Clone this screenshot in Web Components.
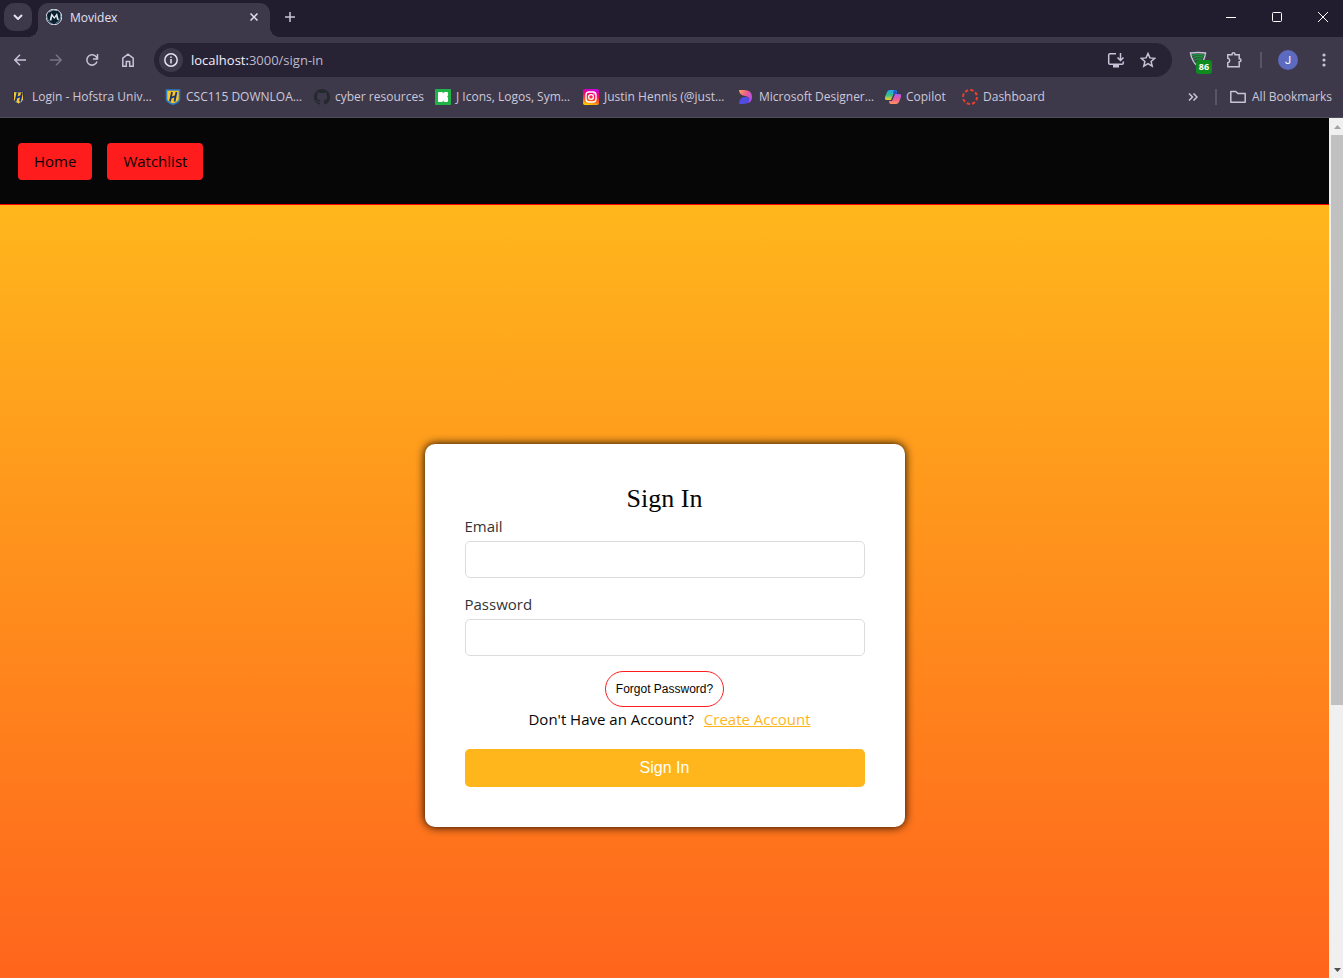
<!DOCTYPE html>
<html lang="en">
<head>
<meta charset="utf-8">
<title>Movidex</title>
<style>
  html, body { height: 100%; margin: 0; }
  body { overflow: hidden; font-family: "Open Sans", "Noto Sans", sans-serif; }
</style>
</head>
<body>
<browser-window></browser-window>

<script>
const define = (name, html) => {
  const template = document.createElement('template');
  template.innerHTML = html;
  customElements.define(name, class extends HTMLElement {
    constructor() {
      super();
      this.attachShadow({ mode: 'open' }).append(template.content.cloneNode(true));
    }
  });
};

define('tool-button', `
  <style>
    :host { display: flex; flex: none; width: 20px; height: 20px; color: #c9c3d9; }
    button { all: unset; display: flex; align-items: center; justify-content: center; width: 100%; height: 100%; }
  </style>
  <button type="button"><slot></slot></button>`);

define('tab-strip', `
  <style>
    :host { display: flex; flex: none; height: 37px; background: #211d2e; color: #e4e0ef; }
    svg { display: block; fill: none; stroke: currentColor; }
    .search { all: unset; display: grid; place-items: center; width: 28px; height: 28px; margin: 3px 6px 0 4px; border-radius: 10px; background: #3d394b; }
    .tab { position: relative; display: flex; align-items: center; box-sizing: border-box; width: 232px; height: 34px; margin-top: 3px; padding: 0 10px 6px 8px; gap: 8px; border-radius: 10px 10px 0 0; background: #3d394b; font-size: 12px; }
    .tab::before, .tab::after { content: ""; position: absolute; bottom: 0; width: 10px; height: 10px; }
    .tab::before { right: 100%; background: radial-gradient(circle at 0 0, transparent 10px, #3d394b 10px); }
    .tab::after { left: 100%; background: radial-gradient(circle at 100% 0, transparent 10px, #3d394b 10px); }
    .name { flex: 1; }
    tool-button { color: #e4e0ef; }
    .tab tool-button { width: 12px; }
    .new { margin: 7px 0 0 10px; color: #c9c3d9; }
    .controls { display: flex; align-items: center; gap: 26px; margin-left: auto; padding: 0 10px 3px 0; }
    .controls tool-button { color: #fff; }
  </style>
  <button class="search" type="button" aria-label="Search tabs"><svg width="10" height="6" viewBox="0 0 10 6" stroke-width="2"><path d="M1 1l4 4 4-4"/></svg></button>
  <div class="tab">
    <svg width="16" height="16" viewBox="0 0 16 16" stroke="none"><circle cx="8" cy="8" r="7.800" fill="#0c1f2e"/><path d="M3 3Q7-.5 11 1.500" stroke="#9db8c6"/><path d="M3.500 11.500L5.500 4l2.800 4L11 4l2 7.500-2-1-.8-3L8.300 10 6.200 7.500l-.7 4z" fill="#dfe9ee" stroke="none"/><path d="M.8 7q.5 6 6 8M14.500 5q1.500 6-5 9.500" stroke="#6f91a3"/></svg>
    <span class="name">Movidex</span>
    <tool-button aria-label="Close tab"><svg width="8" height="8" viewBox="0 0 8 8" stroke-width="1.5"><path d="M.5.5l7 7M7.500.5l-7 7"/></svg></tool-button>
  </div>
  <tool-button class="new" aria-label="New tab"><svg width="12" height="12" viewBox="0 0 12 12" stroke-width="1.5"><path d="M6 1v10M1 6h10"/></svg></tool-button>
  <div class="controls">
    <tool-button aria-label="Minimize"><svg width="10" height="10" viewBox="0 0 10 10"><path d="M0 5.500h10"/></svg></tool-button>
    <tool-button aria-label="Maximize"><svg width="10" height="10" viewBox="0 0 10 10"><rect x=".5" y=".5" width="9" height="9" rx="1"/></svg></tool-button>
    <tool-button aria-label="Close"><svg width="10" height="10" viewBox="0 0 10 10"><path d="M0 0l10 10M10 0L0 10"/></svg></tool-button>
  </div>`);

define('address-bar', `
  <style>
    :host { display: flex; flex: 1; min-width: 0; box-sizing: border-box; align-items: center; height: 34px; padding: 0 14px 0 5px; border-radius: 17px; background: #272335; color: #c9c3d9; }
    svg { display: block; fill: none; stroke: currentColor; stroke-width: 1.5; }
    .info { width: 24px; height: 24px; border-radius: 12px; background: #3d394b; color: #e4e0ef; }
    .url { flex: 1; margin-left: 8px; font-size: 13px; line-height: 20px; color: #bdb8ca; }
    b { font-weight: 400; color: #f1eefa; }
    .star { margin-left: 12px; }
  </style>
  <tool-button class="info" aria-label="Site information"><svg width="14" height="14" viewBox="0 0 14 14"><circle cx="7" cy="7" r="6.200"/><path d="M7 6v4.500M7 3.500v1.500"/></svg></tool-button>
  <div class="url"><b>localhost:</b>3000/sign-in</div>
  <tool-button aria-label="Install"><svg width="18" height="16" viewBox="0 0 18 16"><path d="M9 1.700H3Q1.700 1.700 1.700 3v8q0 1.300 1.300 1.300h12q1.300 0 1.300-1.300V9.500M13.500 1v7M10.500 5.500l3 3 3-3"/><path d="M6 14h6" stroke-width="3"/></svg></tool-button>
  <tool-button class="star" aria-label="Bookmark this page"><svg width="16" height="16" viewBox="0 0 16 16"><path d="M8 1.500l1.900 4.400 4.800.4-3.600 3.200 1.100 4.700L8 11.700l-4.200 2.500 1.100-4.700L1.300 6.300l4.800-.4z"/></svg></tool-button>`);

define('tool-bar', `
  <style>
    :host { display: flex; flex: none; align-items: center; height: 46px; gap: 16px; padding: 0 9px 0 10px; box-sizing: border-box; background: #3d394b; }
    svg { display: block; fill: none; stroke: currentColor; stroke-width: 1.5; }
    .off { color: #777286; }
    .right { display: flex; align-items: center; gap: 16px; color: #c9c3d9; }
    .ext { position: relative; }
    .badge { position: absolute; left: 8px; top: 10px; width: 16px; height: 14px; border-radius: 3px; background: #0f8a1e; color: #fff; font-size: 9px; font-weight: 700; line-height: 14px; text-align: center; }
    .rule { width: 2px; height: 16px; background: #595468; }
    .avatar { width: 20px; height: 20px; border-radius: 50%; background: #5c6bc0; color: #fff; font-family: Roboto, sans-serif; font-size: 11px; }
  </style>
  <tool-button aria-label="Back"><svg width="12" height="12" viewBox="0 0 12 12"><path d="M12 6H1M6 .8L.9 6 6 11.200"/></svg></tool-button>
  <tool-button class="off" aria-label="Forward"><svg width="12" height="12" viewBox="0 0 12 12"><path d="M0 6h11M6 .8L11.100 6 6 11.200"/></svg></tool-button>
  <tool-button aria-label="Reload"><svg width="14" height="14" viewBox="0 0 14 14"><path d="M12 8.500A5.200 5.200 0 1 1 11.500 4.200L12.500 5.700M12.500 1v5H8"/></svg></tool-button>
  <tool-button aria-label="Home page"><svg width="14" height="14" viewBox="0 0 14 14"><path d="M1.800 13.200V5.200L7 1.200l5.200 4v8H8.700V8.500H5.300v4.700z"/></svg></tool-button>
  <address-bar></address-bar>
  <div class="right">
    <tool-button class="ext" aria-label="Blocker"><svg width="18" height="18" viewBox="0 0 18 18" stroke-width="1" stroke="#23ad45"><path d="M1.500 2q8-1 15 0-1 9-7.500 13.500Q3 11 1.500 2z"/><path d="M3 4.500q6-2 12.500 0M4 7q5-2.500 10.500-.5M5 9.500q4-3 8-1" stroke="#1b9638"/></svg><span class="badge">86</span></tool-button>
    <tool-button aria-label="Extensions"><svg width="18" height="18" viewBox="0 0 18 18"><path d="M2.800 3.800H7Q7 1.800 8.500 1.800T10 3.800h4.200v4q1.800 0 1.800 1.500t-1.800 1.500v4.900H2.800v-4q1.900-.4 1.900-2.200T2.800 7.300z"/></svg></tool-button>
    <span class="rule"></span>
    <tool-button class="avatar" aria-label="Profile"><span>J</span></tool-button>
    <tool-button aria-label="Menu"><svg width="4" height="14" viewBox="0 0 4 14"><g fill="currentColor" stroke="none"><circle cx="2" cy="2" r="1.600"/><circle cx="2" cy="7" r="1.600"/><circle cx="2" cy="12" r="1.600"/></g></svg></tool-button>
  </div>`);

define('book-mark', `
  <style>
    :host { display: block; min-width: 0; }
    a { display: flex; align-items: center; gap: 5px; color: #cdc8d9; font-size: 12px; line-height: 18px; white-space: nowrap; text-decoration: none; }
    ::slotted(svg) { display: block; flex: none; fill: none; }
  </style>
  <a href="#"><slot name="icon"></slot><slot></slot></a>`);

define('bookmarks-bar', `
  <style>
    :host { display: flex; flex: none; align-items: center; justify-content: space-between; height: 35px; padding: 0 11px 7px 11px; box-sizing: border-box; border-bottom: 1px solid #514e5c; background: #3d394b; }
    nav { display: grid; grid-template-columns: 137px 132px 104px 131px 138px 130px 60px 80px; column-gap: 17px; }
    .all { display: flex; align-items: center; gap: 12px; color: #c9c3d9; }
    .rule { width: 2px; height: 16px; background: #595468; }
    .chev { display: block; fill: none; stroke: currentColor; stroke-width: 1.5; }
  </style>
  <nav aria-label="Bookmarks">
    <book-mark><svg slot="icon" width="16" height="16" viewBox="0 0 16 16"><path d="M2.500 2.500q5.500 1 10 0v8q0 2.500-5 4.500-5-2-5-4.500z" fill="#f7c52f" stroke="#142f7c"/><path d="M6.500 3.500l-2 9M11 3.500l-2 9M5 9l5-2" stroke="#142f7c" stroke-width="1.800"/></svg>Login - Hofstra Univ…</book-mark>
    <book-mark><svg slot="icon" width="16" height="16" viewBox="0 0 16 16"><path d="M1.500 1h13v9q0 3-6.500 5.200Q1.500 13 1.500 10z" fill="#f9c623" stroke="#2c7bc4" stroke-width="1.600"/><path d="M7 3L5 12.500M11.500 3l-2 9.500M5.500 9l5-2" stroke="#1a3474" stroke-width="1.800"/></svg>CSC115 DOWNLOA…</book-mark>
    <book-mark><svg slot="icon" width="16" height="16" viewBox="0 0 16 16"><path fill="#24292e" d="M8 0C3.580 0 0 3.580 0 8c0 3.540 2.290 6.530 5.470 7.590.4.070.55-.17.55-.38v-1.490c-2.010.37-2.530-.49-2.690-.94-.09-.23-.48-.94-.82-1.130-.28-.15-.68-.52-.01-.53.63-.01 1.080.58 1.230.82.72 1.210 1.870.87 2.330.66.07-.52.28-.87.51-1.070-1.780-.2-3.640-.89-3.640-3.950 0-.87.31-1.590.82-2.150-.08-.2-.36-1.020.08-2.120 0 0 .67-.21 2.200.82a7.420 7.420 0 0 1 4 0c1.530-1.040 2.200-.82 2.200-.82.44 1.100.16 1.920.08 2.120.51.56.82 1.270.82 2.150 0 3.070-1.870 3.750-3.650 3.950.29.25.54.73.54 1.480v2.200c0 .21.15.46.55.38A8 8 0 0 0 16 8c0-4.420-3.580-8-8-8z"/></svg>cyber resources</book-mark>
    <book-mark><svg slot="icon" width="16" height="16" viewBox="0 0 16 16"><rect width="16" height="16" rx="1" fill="#20b347"/><path d="M4 3h3q1 0 1 2 0-2 2-2h2q1 0 1 1v2q0 1-1 2 1 0 1 1v3q0 1-1 1h-2q-2 0-2-2 0 2-1 2H4q-1 0-1-1V4q0-1 1-1z" fill="#fff"/></svg>J Icons, Logos, Sym…</book-mark>
    <book-mark><svg slot="icon" width="16" height="16" viewBox="0 0 16 16"><defs><linearGradient id="ig" x1=".3" y1="1" x2=".5" y2="0"><stop offset="0" stop-color="#ffd600"/><stop offset=".3" stop-color="#ff5a1f"/><stop offset=".65" stop-color="#ff0169"/><stop offset="1" stop-color="#c800d8"/></linearGradient></defs><rect width="16" height="16" rx="2" fill="url(#ig)"/><rect x="3" y="3" width="10" height="10" rx="3" stroke="#fff" stroke-width="1.400"/><circle cx="8" cy="8" r="2.400" stroke="#fff" stroke-width="1.300"/><circle cx="11" cy="5" r=".7" fill="#fff"/></svg>Justin Hennis (@just…</book-mark>
    <book-mark><svg slot="icon" width="16" height="16" viewBox="0 0 16 16"><defs><linearGradient id="de" x2="1" y2=".6"><stop stop-color="#ffa45c"/><stop offset=".5" stop-color="#ee6088"/><stop offset="1" stop-color="#b44df0"/></linearGradient></defs><path d="M1 1h5q8 0 8 7 0 5-4 6l1-5q-2-2-4-2-6-1-6-6z" fill="url(#de)"/><path d="M1 15q0-6 5-7 4 0 5.500 1 .5 6-6.500 6z" fill="#514be0"/></svg>Microsoft Designer…</book-mark>
    <book-mark><svg slot="icon" width="16" height="16" viewBox="0 0 16 16"><defs><linearGradient id="cl" x2="0" y2="1"><stop stop-color="#20a7f5"/><stop offset=".5" stop-color="#35bd8a"/><stop offset="1" stop-color="#f3d32b"/></linearGradient><linearGradient id="cr" x2="0" y2="1"><stop stop-color="#aa5cf0"/><stop offset=".5" stop-color="#ee5799"/><stop offset="1" stop-color="#ff985b"/></linearGradient></defs><path d="M5 1h5q2 0 2 3H9L6 11H2q-3 0-2-3l2-5q1-2 3-2z" fill="url(#cl)"/><path d="M11 15H6q-2 0-2-3h3l3-7h4q3 0 2 3l-2 5q-1 2-3 2z" fill="url(#cr)"/><path d="M9 1q3 0 3 4h-2L8 4z" fill="#1e55d6"/></svg>Copilot</book-mark>
    <book-mark><svg slot="icon" width="16" height="16" viewBox="0 0 16 16"><circle cx="8" cy="8" r="7" stroke="#e8402f" stroke-width="2" stroke-dasharray="3.400 2.098"/></svg>Dashboard</book-mark>
  </nav>
  <div class="all">
    <tool-button aria-label="More bookmarks"><svg class="chev" width="10" height="8" viewBox="0 0 10 8"><path d="M1 .5L4.500 4 1 7.500M5.500.5L9 4 5.500 7.500"/></svg></tool-button>
    <span class="rule"></span>
    <book-mark><svg slot="icon" width="18" height="16" viewBox="0 0 18 16"><path d="M1.800 2.500h5l2 2h7.400v8.800H1.800z" stroke="#c9c3d9" stroke-width="1.500" stroke-linejoin="round"/></svg>All Bookmarks</book-mark>
  </div>`);

define('site-nav', `
  <style>
    :host { display: flex; flex: none; align-items: center; gap: 15px; height: 87px; box-sizing: border-box; padding: 0 18px; border-bottom: 1px solid #ff0000; background: #060606; }
    a { padding: 0 16px; border-radius: 4px; background: #ff1c1c; color: #060606; font-size: 15px; line-height: 37px; text-decoration: none; }
  </style>
  <a href="#">Home</a><a href="#">Watchlist</a>`);

define('form-field', `
  <style>
    :host { display: block; }
    label { display: flex; flex-direction: column; gap: 3px; color: #333; font-size: 15px; line-height: 24px; }
    input { box-sizing: border-box; width: 100%; height: 37px; padding: 0 10px; border: 1px solid #dcdcdc; border-radius: 5px; background: #fff; font-size: 16px; }
  </style>
  <label><slot></slot><input></label>`);

define('sign-in-card', `
  <style>
    :host { display: block; box-sizing: border-box; width: 480px; max-width: 100%; padding: 40px; border-radius: 10px; background: #fff; box-shadow: 0 0 10px #000; }
    form { display: flex; flex-direction: column; }
    h1 { margin: 0; color: #060606; font: 400 26px/30px "Liberation Serif", serif; text-align: center; }
    form-field { margin-bottom: 14px; }
    button { box-sizing: border-box; font-family: "Liberation Sans", Arial, sans-serif; }
    .forgot { align-self: center; height: 36px; margin-top: 1px; padding: 0 10px; border: 1px solid #ff1c1c; border-radius: 18px; background: #fff; color: #060606; font-size: 12px; }
    .join { display: flex; justify-content: center; gap: 10px; padding-left: 10px; color: #060606; font-size: 15px; line-height: 24px; }
    a { color: #ffb61c; }
    .submit { height: 38px; margin-top: 18px; border: 0; border-radius: 5px; background: #ffb61c; color: #fff; font-size: 16px; }
  </style>
  <form>
    <h1>Sign In</h1>
    <form-field>Email</form-field>
    <form-field>Password</form-field>
    <button class="forgot" type="button">Forgot Password?</button>
    <div class="join"><span>Don't Have an Account?</span><a href="#">Create Account</a></div>
    <button class="submit" type="button">Sign In</button>
  </form>`);

define('web-page', `
  <style>
    :host { display: flex; flex-direction: column; flex: 1; min-width: 0; overflow: hidden; }
    main { display: flex; flex: none; align-items: center; justify-content: center; height: calc(100vh - 118px); background: linear-gradient(#ffb61c, #ff5c1c); }
  </style>
  <site-nav></site-nav>
  <main><sign-in-card></sign-in-card></main>`);

define('scroll-track', `
  <style>
    :host { display: flex; flex: none; flex-direction: column; width: 14px; background: #f0f0f0; }
    svg { display: block; flex: none; margin-left: 1px; }
    .track { flex: 1; padding-left: 2px; }
    .thumb { height: 69%; background: #c1c1c1; }
  </style>
  <svg width="13" height="17" viewBox="0 0 13 17"><path d="M4 11l3.500-4 3.500 4z" fill="#a3a3a3"/></svg>
  <div class="track"><div class="thumb"></div></div>
  <svg width="13" height="17" viewBox="0 0 13 17"><path d="M4 7h7l-3.500 4z" fill="#505050"/></svg>`);

define('browser-window', `
  <style>
    :host { display: flex; flex-direction: column; height: 100vh; overflow: hidden; }
    .view { display: flex; flex: 1; min-height: 0; }
  </style>
  <tab-strip></tab-strip>
  <tool-bar></tool-bar>
  <bookmarks-bar></bookmarks-bar>
  <div class="view"><web-page></web-page><scroll-track></scroll-track></div>`);
</script>
</body>
</html>
